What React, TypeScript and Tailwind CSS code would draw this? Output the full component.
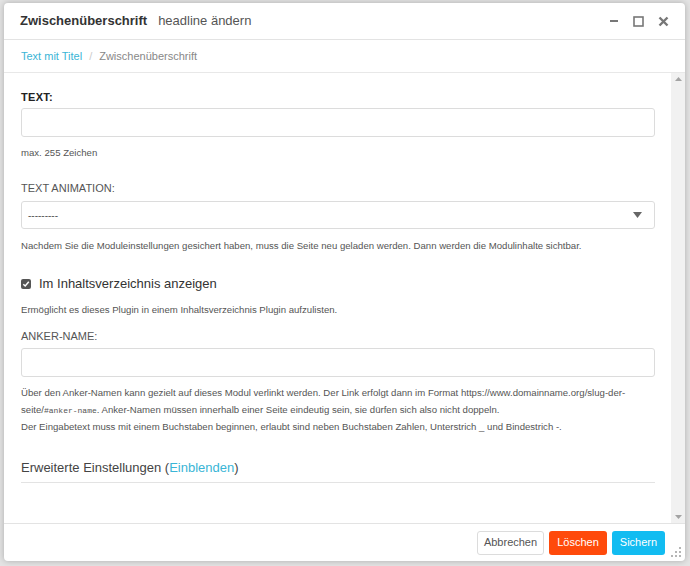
import React from "react";

const font = { fontFamily: '"Liberation Sans", Arial, sans-serif' };

function Grip() {
  const dots = [
    [8, 0],
    [4, 4],
    [8, 4],
    [0, 8],
    [4, 8],
    [8, 8],
  ];
  return (
    <svg width="11" height="11" viewBox="0 0 11 11" className="absolute right-[3px] bottom-[3px]">
      {dots.map(([x, y], i) => (
        <rect key={i} x={x} y={y} width="2" height="2" fill="#b5b5b5" />
      ))}
    </svg>
  );
}

export default function App() {
  return (
    <div className="w-[690px] h-[566px] bg-[#e4e4e4] overflow-hidden pt-[3px] pl-[4px]" style={font}>
      <div className="relative w-[681px] h-[558px] bg-white rounded-[4px] shadow-[0_0_6px_rgba(0,0,0,0.25)] flex flex-col overflow-hidden">
        {/* Header */}
        <div className="h-[37px] flex items-center pl-[16px] pr-[16px] border-b border-[#e3e3e3] shrink-0">
          <span className="text-[13px] font-bold text-[#333]">Zwischenüberschrift</span>
          <span className="text-[13px] text-[#555] ml-[11px]">headline ändern</span>
          <div className="ml-auto flex items-center gap-[14px] mr-[0px]">
            <svg width="10" height="10" viewBox="0 0 10 10">
              <rect x="1" y="4" width="8" height="2" fill="#777" />
            </svg>
            <svg width="11" height="11" viewBox="0 0 11 11">
              <rect x="1" y="1" width="9" height="9" fill="none" stroke="#777" strokeWidth="1.6" />
            </svg>
            <svg width="11" height="11" viewBox="0 0 11 11">
              <path d="M1.5 1.5 L9.5 9.5 M9.5 1.5 L1.5 9.5" stroke="#777" strokeWidth="2.4" />
            </svg>
          </div>
        </div>
        {/* Breadcrumb */}
        <div className="h-[33px] flex items-center pl-[17px] border-b border-[#e8e8e8] shrink-0 text-[11px]">
          <span className="text-[#3ab5d6]">Text mit Titel</span>
          <span className="text-[#ccc] mx-[7px]">/</span>
          <span className="text-[#888]">Zwischenüberschrift</span>
        </div>
        {/* Content */}
        <div className="flex flex-1 min-h-0">
          <div className="flex-1 overflow-hidden pl-[17px] pr-[16px] flex flex-col">
            <div className="mt-[16px] h-[16px] leading-[16px] text-[11px] font-bold text-[#222] tracking-[0.3px]">TEXT:</div>
            <div className="mt-[3px] h-[29px] border border-[#dcdcdc] rounded-[3px] bg-white shrink-0" />
            <div className="mt-[9px] h-[14px] leading-[14px] text-[9.6px] text-[#555]">max. 255 Zeichen</div>

            <div className="mt-[20px] h-[16px] leading-[16px] text-[11px] text-[#555]">TEXT ANIMATION:</div>
            <div className="mt-[5px] h-[28px] border border-[#dcdcdc] rounded-[3px] bg-white shrink-0 flex items-center pl-[6px] pr-[12px]">
              <span className="text-[10px] text-[#555]">---------</span>
              <svg width="9" height="6" viewBox="0 0 9 6" className="ml-auto">
                <path d="M0 0 L9 0 L4.5 6 Z" fill="#666" />
              </svg>
            </div>
            <div className="mt-[10px] h-[14px] leading-[14px] text-[9.6px] text-[#555] whitespace-nowrap">
              Nachdem Sie die Moduleinstellungen gesichert haben, muss die Seite neu geladen werden. Dann werden die Modulinhalte sichtbar.
            </div>

            <div className="mt-[22px] h-[18px] flex items-center">
              <div className="w-[10px] h-[10px] rounded-[2px] bg-[#555] flex items-center justify-center">
                <svg width="8" height="8" viewBox="0 0 8 8">
                  <path d="M1.3 4.2 L3.2 6 L6.8 1.8" fill="none" stroke="#fff" strokeWidth="1.5" />
                </svg>
              </div>
              <span className="ml-[8px] text-[13px] text-[#333]">Im Inhaltsverzeichnis anzeigen</span>
            </div>
            <div className="mt-[10px] h-[14px] leading-[14px] text-[9.6px] text-[#555]">
              Ermöglicht es dieses Plugin in einem Inhaltsverzeichnis Plugin aufzulisten.
            </div>

            <div className="mt-[11px] h-[16px] leading-[16px] text-[11px] text-[#555]">ANKER-NAME:</div>
            <div className="mt-[4px] h-[29px] border border-[#dcdcdc] rounded-[3px] bg-white shrink-0" />
            <div className="mt-[8px] text-[9.6px] leading-[16.5px] text-[#555]">
              <div className="whitespace-nowrap">
                Über den Anker-Namen kann gezielt auf dieses Modul verlinkt werden. Der Link erfolgt dann im Format https://www.domainname.org/slug-der-
              </div>
              <div className="whitespace-nowrap">
                seite/
                <span className="text-[8px]" style={{ fontFamily: '"Liberation Mono", "Courier New", monospace' }}>
                  #anker-name
                </span>
                . Anker-Namen müssen innerhalb einer Seite eindeutig sein, sie dürfen sich also nicht doppeln.
              </div>
              <div className="whitespace-nowrap">
                Der Eingabetext muss mit einem Buchstaben beginnen, erlaubt sind neben Buchstaben Zahlen, Unterstrich _ und Bindestrich -.
              </div>
            </div>

            <div className="mt-[23px] pb-[6px] border-b border-[#e3e3e3] h-[24px] leading-[18px] text-[13px] text-[#444] shrink-0">
              Erweiterte Einstellungen (<span className="text-[#3ab5d6]">Einblenden</span>)
            </div>
          </div>
          {/* Scrollbar */}
          <div className="w-[14px] bg-[#f1f1f1] flex flex-col items-center justify-between py-[4px] shrink-0">
            <svg width="7" height="4" viewBox="0 0 7 4">
              <path d="M0 4 L7 4 L3.5 0 Z" fill="#a3a3a3" />
            </svg>
            <svg width="7" height="4" viewBox="0 0 7 4">
              <path d="M0 0 L7 0 L3.5 4 Z" fill="#a3a3a3" />
            </svg>
          </div>
        </div>
        {/* Footer */}
        <div className="relative h-[38px] border-t border-[#e3e3e3] flex items-center justify-end pr-[20px] gap-[5px] shrink-0">
          <button className="h-[24px] w-[67px] border border-[#dcdcdc] rounded-[3px] bg-white text-[11px] text-[#555]">
            Abbrechen
          </button>
          <button className="h-[24px] w-[58px] rounded-[3px] bg-[#ff4a0b] text-[11px] text-white">Löschen</button>
          <button className="h-[24px] w-[53px] rounded-[3px] bg-[#12bcf1] text-[11px] text-white">Sichern</button>
          <Grip />
        </div>
      </div>
    </div>
  );
}
